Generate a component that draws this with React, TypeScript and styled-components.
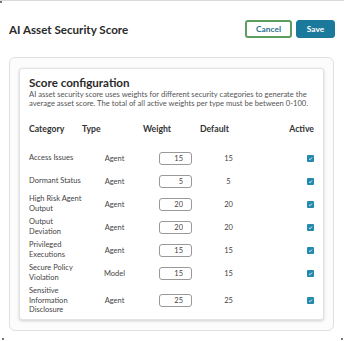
import React from "react";
import styled, { createGlobalStyle } from "styled-components";

const Global = createGlobalStyle`
  html, body { margin: 0; padding: 0; background: #ffffff; }
  body { font-family: Lato, "Open Sans", sans-serif; color: #333; }
  * { box-sizing: border-box; }
`;

const Page = styled.div`
  position: relative;
  width: 344px;
  height: 341px;
  border-top: 1px solid #d9d9d9;
  padding: 0 10px 0 9px;
`;

const Corner = styled.span<{ $x: string; $y: string }>`
  position: absolute;
  width: 2px;
  height: 2px;
  background: #777;
  ${(p) => p.$x};
  ${(p) => p.$y};
`;

const Header = styled.div`
  display: flex;
  align-items: center;
  justify-content: space-between;
  margin-top: 19px;
  height: 18px;
`;

const Title = styled.h1`
  margin: 0;
  font-size: 11.6px;
  font-weight: 700;
  color: #2a2a2a;
`;

const Actions = styled.div`
  display: flex;
  gap: 4px;
  margin-right: -1px;
`;

const Button = styled.button<{ $primary?: boolean }>`
  height: 18px;
  padding: 0;
  width: ${(p) => (p.$primary ? "39px" : "47px")};
  border-radius: 3px;
  font-family: Lato, sans-serif;
  font-weight: 700;
  font-size: 8.4px;
  cursor: pointer;
  border: ${(p) => (p.$primary ? "1px solid #1b7a9b" : "2px solid #5c9e5f")};
  background: ${(p) => (p.$primary ? "#1b7a9b" : "#ffffff")};
  color: ${(p) => (p.$primary ? "#ffffff" : "#26728f")};
`;

const Outer = styled.div`
  margin-top: 19px;
  height: 274px;
  border: 1px solid #e0e0e0;
  border-radius: 6px;
  background: #fcfcfc;
  padding: 10px 9px;
`;

const Inner = styled.div`
  height: 100%;
  background: #ffffff;
  border: 1px solid #e3e3e3;
  border-radius: 3px;
  box-shadow: 0 1px 3px rgba(0, 0, 0, 0.18);
  padding: 7px 9px 0 9px;
`;

const Heading = styled.h2`
  margin: 0;
  font-size: 11.6px;
  font-weight: 700;
  color: #2a2a2a;
  line-height: 14px;
`;

const Description = styled.p`
  margin: 0;
  font-size: 7.6px;
  line-height: 9px;
  color: #555;
`;

const Table = styled.div`
  margin-top: 15px;
  display: grid;
  grid-template-columns: 53px 61px 57px 57px 1fr;
  row-gap: 3px;
  align-items: center;
`;

const HeadCell = styled.div<{ $end?: boolean }>`
  font-size: 8.7px;
  font-weight: 700;
  color: #333;
  line-height: 12px;
  margin-bottom: 10px;
  text-align: ${(p) => (p.$end ? "right" : "left")};
`;

const CatCell = styled.div`
  font-size: 7.5px;
  line-height: 9.6px;
  color: #444;
  min-height: 20px;
  white-space: nowrap;
  display: flex;
  flex-direction: column;
  justify-content: center;
`;

const TypeCell = styled.div`
  font-size: 7.5px;
  color: #444;
  text-align: center;
  padding-left: 4px;
`;

const WeightCell = styled.div`
  padding-left: 16px;
  display: flex;
`;

const WeightInput = styled.input`
  width: 33px;
  height: 13px;
  border: 1px solid #999;
  border-radius: 3px;
  padding: 0 8px 0 0;
  text-align: right;
  font-family: Lato, sans-serif;
  font-size: 7.5px;
  color: #444;
  outline: none;
`;

const DefaultCell = styled.div`
  font-size: 7.5px;
  color: #444;
  text-align: center;
`;

const ActiveCell = styled.div`
  display: flex;
  justify-content: flex-end;
`;

const Check = styled.span`
  width: 7px;
  height: 7px;
  border-radius: 1px;
  background: #2389ad;
  display: flex;
  align-items: center;
  justify-content: center;
`;

type Row = { lines: string[]; type: string; weight: number; def: number };

const rows: Row[] = [
  { lines: ["Access Issues"], type: "Agent", weight: 15, def: 15 },
  { lines: ["Dormant Status"], type: "Agent", weight: 5, def: 5 },
  { lines: ["High Risk Agent", "Output"], type: "Agent", weight: 20, def: 20 },
  { lines: ["Output", "Deviation"], type: "Agent", weight: 20, def: 20 },
  { lines: ["Privileged", "Executions"], type: "Agent", weight: 15, def: 15 },
  { lines: ["Secure Policy", "Violation"], type: "Model", weight: 15, def: 15 },
  { lines: ["Sensitive", "Information", "Disclosure"], type: "Agent", weight: 25, def: 25 },
];

export default function App() {
  return (
    <>
      <Global />
      <Page>
        <Corner $x="left: 0" $y="top: 0" />
        <Corner $x="left: 2px" $y="top: 337px" />
        <Corner $x="left: 341px" $y="top: 337px" />
        <Header>
          <Title>AI Asset Security Score</Title>
          <Actions>
            <Button>Cancel</Button>
            <Button $primary>Save</Button>
          </Actions>
        </Header>
        <Outer>
          <Inner>
            <Heading>Score configuration</Heading>
            <Description>
              AI asset security score uses weights for different security categories to generate the
              average asset score. The total of all active weights per type must be between 0-100.
            </Description>
            <Table>
              <HeadCell>Category</HeadCell>
              <HeadCell>Type</HeadCell>
              <HeadCell>Weight</HeadCell>
              <HeadCell>Default</HeadCell>
              <HeadCell $end>Active</HeadCell>
              {rows.map((r) => (
                <React.Fragment key={r.lines.join(" ")}>
                  <CatCell>
                    {r.lines.map((l) => (
                      <span key={l}>{l}</span>
                    ))}
                  </CatCell>
                  <TypeCell>{r.type}</TypeCell>
                  <WeightCell>
                    <WeightInput defaultValue={r.weight} />
                  </WeightCell>
                  <DefaultCell>{r.def}</DefaultCell>
                  <ActiveCell>
                    <Check>
                      <svg width="5" height="5" viewBox="0 0 10 10">
                        <path d="M2 5.5 L4.2 7.5 L8 3" stroke="#fff" strokeWidth="1.6" fill="none" />
                      </svg>
                    </Check>
                  </ActiveCell>
                </React.Fragment>
              ))}
            </Table>
          </Inner>
        </Outer>
      </Page>
    </>
  );
}
